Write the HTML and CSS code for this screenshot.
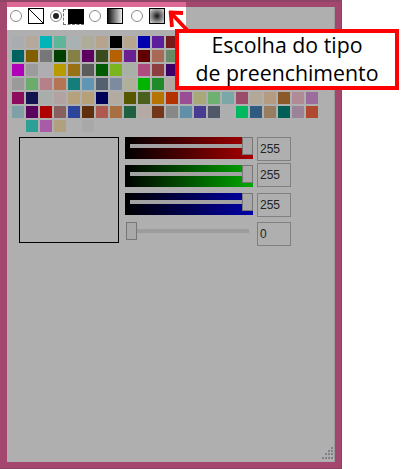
FILE: index.html
```html
<!DOCTYPE html>
<html lang="pt">
<head>
<meta charset="utf-8">
<title>Escolha do tipo de preenchimento</title>
<link rel="stylesheet" href="styles.css">
</head>
<body>
<div class="window">
  <div class="band"></div>
  <div class="panel">
    <div class="toolbar">
      <span class="radio"></span>
      <span class="fill fill-none"><svg width="16" height="16" viewBox="0 0 16 16"><line x1="1" y1="1" x2="15" y2="15" stroke="#000" stroke-width="1"/></svg></span>
      <span class="radio radio-on"></span>
      <span class="focus"><span class="fill fill-solid"></span></span>
      <span class="radio"></span>
      <span class="fill fill-linear"></span>
      <span class="radio"></span>
      <span class="fill fill-radial"></span>
    </div>
    <div class="swatches">
      <i style="background:#a9adb0"></i><i style="background:#b4a99b"></i><i style="background:#00b4b8"></i><i style="background:#5fb598"></i><i style="background:#a9b2b2"></i><i style="background:#adad99"></i><i style="background:#b7a48e"></i><i style="background:#000000"></i><i style="background:#b7a68f"></i><i style="background:#0000ae"></i><i style="background:#5d1e9c"></i><i style="background:#741c1c"></i><i style="background:#a8a8a8"></i><i style="background:#a8a8a8"></i><i style="background:#a8a8a8"></i><i style="background:#a8a8a8"></i><i style="background:#a8a8a8"></i><i style="background:#a8a8a8"></i><i style="background:#a8a8a8"></i><i style="background:#a8a8a8"></i><i style="background:#a8a8a8"></i><i style="background:#a8a8a8"></i>
      <i style="background:#006363"></i><i style="background:#805f00"></i><i style="background:#777777"></i><i style="background:#004000"></i><i style="background:#858046"></i><i style="background:#5e0060"></i><i style="background:#3c4a20"></i><i style="background:#b56100"></i><i style="background:#6a2090"></i><i style="background:#600000"></i><i style="background:#a86a55"></i><i style="background:#668a66"></i><i style="background:#a8a8a8"></i><i style="background:#a8a8a8"></i><i style="background:#a8a8a8"></i><i style="background:#a8a8a8"></i><i style="background:#a8a8a8"></i><i style="background:#a8a8a8"></i><i style="background:#a8a8a8"></i><i style="background:#a8a8a8"></i><i style="background:#a8a8a8"></i><i style="background:#a8a8a8"></i>
      <i style="background:#b000b8"></i><i style="background:#9c9c9c"></i><i style="background:#aeadb2"></i><i style="background:#b79b00"></i><i style="background:#9a7014"></i><i style="background:#5b5b5b"></i><i style="background:#005a00"></i><i style="background:#7ab520"></i><i style="background:#a9b1a7"></i><i style="background:#b04b80"></i><i style="background:#8e3d40"></i><i style="background:#3a0068"></i><i style="background:#a8a8a8"></i><i style="background:#a8a8a8"></i><i style="background:#a8a8a8"></i><i style="background:#a8a8a8"></i><i style="background:#a8a8a8"></i><i style="background:#a8a8a8"></i><i style="background:#a8a8a8"></i><i style="background:#a8a8a8"></i><i style="background:#a8a8a8"></i><i style="background:#a8a8a8"></i>
      <i style="background:#9a9a9a"></i><i style="background:#6bab6b"></i><i style="background:#b68088"></i><i style="background:#b57555"></i><i style="background:#137e7a"></i><i style="background:#6095b4"></i><i style="background:#536070"></i><i style="background:#7e8aa0"></i><i style="background:#b0b09a"></i><i style="background:#00b400"></i><i style="background:#208a28"></i><i style="background:#b0a8a0"></i><i style="background:#a8a8a8"></i><i style="background:#a8a8a8"></i><i style="background:#a8a8a8"></i><i style="background:#a8a8a8"></i><i style="background:#a8a8a8"></i><i style="background:#a8a8a8"></i><i style="background:#a8a8a8"></i><i style="background:#a8a8a8"></i><i style="background:#a8a8a8"></i><i style="background:#a8a8a8"></i>
      <i style="background:#8c0c5e"></i><i style="background:#13134f"></i><i style="background:#a8aeaa"></i><i style="background:#b2a3a3"></i><i style="background:#b5a17c"></i><i style="background:#b5a078"></i><i style="background:#000058"></i><i style="background:#b3aba0"></i><i style="background:#575700"></i><i style="background:#4a601c"></i><i style="background:#b57300"></i><i style="background:#b33200"></i><i style="background:#9a4c94"></i><i style="background:#a8a878"></i><i style="background:#6eb070"></i><i style="background:#7aa8a8"></i><i style="background:#9a4c68"></i><i style="background:#b3a898"></i><i style="background:#b59c80"></i><i style="background:#8c5a28"></i><i style="background:#b08a94"></i><i style="background:#9c6c9c"></i>
      <i style="background:#80a0a8"></i><i style="background:#5a005e"></i><i style="background:#b00000"></i><i style="background:#886060"></i><i style="background:#2c449c"></i><i style="background:#5f300f"></i><i style="background:#ae5a50"></i><i style="background:#a87040"></i><i style="background:#1e6040"></i><i style="background:#b5aba4"></i><i style="background:#723818"></i><i style="background:#888888"></i><i style="background:#6090a8"></i><i style="background:#483c90"></i><i style="background:#50586a"></i><i style="background:#aeaeae"></i><i style="background:#00b860"></i><i style="background:#305a80"></i><i style="background:#987e60"></i><i style="background:#006058"></i><i style="background:#9c8498"></i><i style="background:#b04830"></i>
      <i></i><i style="background:#2ca094"></i><i style="background:#a85ca8"></i><i style="background:#b0a080"></i><i></i><i style="background:#a8a8a8"></i>
    </div>
    <div class="editor">
      <div class="preview"></div>
      <div class="channels">
        <div class="channel">
          <div class="slider slider-red"><span class="track"></span><span class="thumb"></span></div>
          <div class="value">255</div>
        </div>
        <div class="channel channel-raised">
          <div class="slider slider-green"><span class="track"></span><span class="thumb"></span></div>
          <div class="value">255</div>
        </div>
        <div class="channel">
          <div class="slider slider-blue"><span class="track"></span><span class="thumb"></span></div>
          <div class="value">255</div>
        </div>
        <div class="channel channel-alpha">
          <div class="slider slider-alpha"><span class="thumb"></span><span class="track"></span></div>
          <div class="value">0</div>
        </div>
      </div>
    </div>
    <svg class="grip" width="11" height="13" viewBox="0 0 11 13">
      <g fill="#7f8288">
        <rect x="9" y="0" width="2" height="2"/>
        <rect x="6" y="3" width="2" height="2"/><rect x="9" y="3" width="2" height="2"/>
        <rect x="3" y="6" width="2" height="2"/><rect x="6" y="6" width="2" height="2"/><rect x="9" y="6" width="2" height="2"/>
        <rect x="0" y="10" width="2" height="2"/><rect x="3" y="10" width="2" height="2"/><rect x="6" y="10" width="2" height="2"/><rect x="9" y="10" width="2" height="2"/>
      </g>
    </svg>
  </div>
</div>
<svg class="arrow" width="24" height="24" viewBox="0 0 24 24">
  <g fill="none" stroke="#ff0000" stroke-width="3.8">
    <line x1="3" y1="3" x2="20" y2="21"/>
    <line x1="1" y1="2.5" x2="15" y2="3"/>
    <line x1="2.5" y1="1" x2="4" y2="17"/>
  </g>
</svg>
<div class="callout"><div class="callout-text">Escolha do tipo<br>de preenchimento</div></div>
</body>
</html>
```
FILE: styles.css
```css
* { box-sizing: border-box; }
html, body { margin: 0; padding: 0; background: #fff; }
body { width: 407px; height: 469px; overflow: hidden; position: relative; }

.window {
  width: 342px;
  height: 469px;
  padding: 2px 7px 7px;
  background: #a3476e;
  box-shadow: inset 0 2px 0 #8f4566, inset -1px -1px 0 #8a4462;
}
.band { width: 179px; height: 5px; background: #dd6a96; }
.panel {
  position: relative;
  height: 455px;
  background: #afafaf;
  box-shadow: inset -1px 0 0 #9a9a9a;
}

.toolbar {
  width: 179px;
  height: 23px;
  padding: 1px 0 0 3px;
  background: #fff;
  display: flex;
  align-items: flex-start;
}
.radio {
  flex: none;
  width: 12px;
  height: 12px;
  border: 1px solid #8a8a8a;
  border-radius: 50%;
  background: #fff;
  display: flex;
  align-items: center;
  justify-content: center;
  margin: 2px 6px 0 0;
}
.radio-on { margin-right: 0; }
.radio-on::after {
  content: "";
  width: 6px;
  height: 6px;
  border-radius: 50%;
  background: #222;
}
.fill {
  flex: none;
  display: block;
  width: 16px;
  height: 16px;
  border: 1px solid #000;
  margin-right: 6px;
}
.fill-none { background: #fff; }
.fill-none svg { display: block; margin: -1px; }
.fill-solid { background: #000; margin: 0; }
.fill-linear { background: linear-gradient(to right, #111, #eee); margin-right: 8px; }
.fill-radial { background: radial-gradient(circle at center, #111 0, #777 45%, #ddd 100%); margin: 0; }
.focus {
  flex: none;
  width: 21px;
  height: 16px;
  margin: 1px 5px 0 1px;
  padding-left: 4px;
  border: 1px dashed #777;
  border-right: 0;
  display: flex;
  align-items: center;
}
.focus .fill { height: 15px; width: 16px; margin-top: -1px; }

.swatches {
  margin: 6px 0 0 5px;
  display: grid;
  grid-template-columns: repeat(22, 12px);
  grid-auto-rows: 12px;
  gap: 2px;
}
.swatches i { display: block; }

.editor {
  margin: 5px 0 0 12px;
  display: flex;
  gap: 6px;
}
.preview {
  flex: none;
  width: 100px;
  height: 106px;
  border: 1px solid #000;
}
.channels { display: flex; flex-direction: column; }
.channel {
  height: 28px;
  display: flex;
  align-items: flex-start;
  gap: 4px;
}
.channel-raised .value { margin-top: -2px; }
.channel-alpha { margin-top: 1px; height: 24px; }

.slider {
  width: 128px;
  height: 22px;
  display: flex;
  align-items: flex-start;
  padding-left: 5px;
}
.slider-red { background: linear-gradient(to right, #000, #a80000); }
.slider-green { background: linear-gradient(to right, #000, #00a800); }
.slider-blue { background: linear-gradient(to right, #000, #0000a8); }
.slider-alpha { padding-left: 1px; }
.track {
  flex: none;
  width: 112px;
  height: 4px;
  margin-top: 7px;
  background: #a3a3a3;
}
.slider-alpha .track { background: #9c9c9c; }
.thumb {
  flex: none;
  width: 11px;
  height: 18px;
  background: #a9a9a9;
  border: 1px solid #777;
}
.value {
  width: 34px;
  height: 24px;
  padding: 2px 0 0 2px;
  border: 1px solid #808080;
  font: 12px/18px "Liberation Sans", Arial, sans-serif;
  color: #222;
}

.grip { position: absolute; right: 2px; bottom: 2px; }

.arrow { position: absolute; left: 168px; top: 10px; }
.callout {
  position: absolute;
  left: 175px;
  top: 29px;
  width: 224px;
  height: 61px;
  border: 4px solid #ff0000;
  background: #fff;
  color: #000;
  text-align: center;
  font: 21.3px/28px "Open Sans", sans-serif;
}
.callout-text { margin-top: -2px; }
```
